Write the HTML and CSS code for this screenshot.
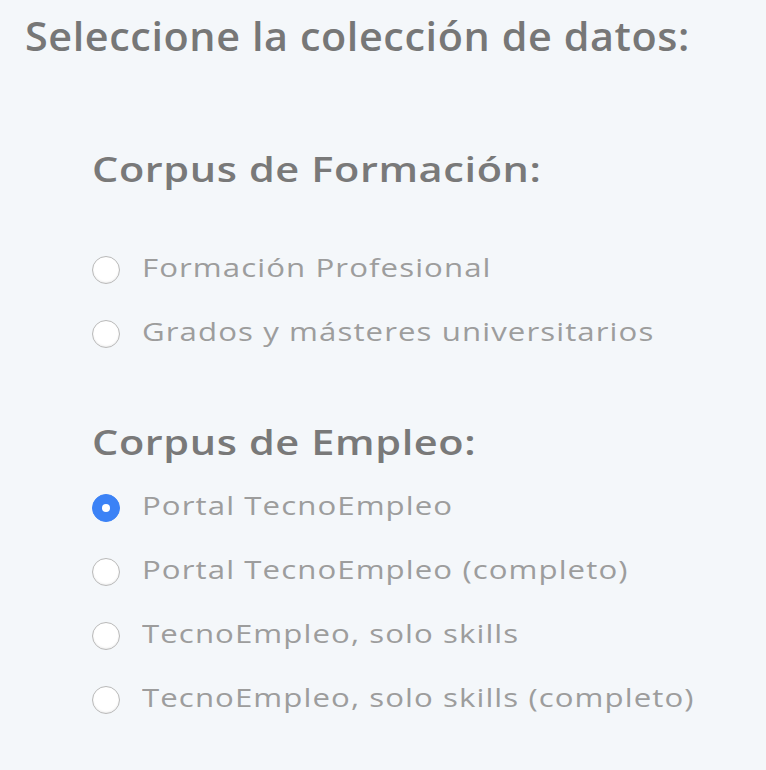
FILE: index.html
```html
<!DOCTYPE html>
<html lang="es">
<head>
<meta charset="utf-8">
<link rel="stylesheet" href="styles.css">
</head>
<body>
<div class="page">
  <h1 class="title"><span class="wide">Seleccione la colección de datos:</span></h1>
  <div class="group">
    <h2 class="group-title first"><span class="wide">Corpus de Formación:</span></h2>
    <label class="opt"><span class="radio"></span><span class="opt-text">Formación Profesional</span></label>
    <label class="opt"><span class="radio"></span><span class="opt-text">Grados y másteres universitarios</span></label>
    <h2 class="group-title second"><span class="wide">Corpus de Empleo:</span></h2>
    <label class="opt"><span class="radio checked"></span><span class="opt-text">Portal TecnoEmpleo</span></label>
    <label class="opt"><span class="radio"></span><span class="opt-text">Portal TecnoEmpleo (completo)</span></label>
    <label class="opt"><span class="radio"></span><span class="opt-text">TecnoEmpleo, solo skills</span></label>
    <label class="opt"><span class="radio"></span><span class="opt-text">TecnoEmpleo, solo skills (completo)</span></label>
  </div>
</div>
</body>
</html>
```
FILE: styles.css
```css
html, body {
  margin: 0;
  padding: 0;
  background: #f4f7fa;
}
body {
  font-family: "Open Sans", "DejaVu Sans", sans-serif;
  width: 766px;
  height: 770px;
  overflow: hidden;
}
.page {
  padding: 13px 0 0 25px;
}
.wide {
  display: inline-block;
  transform-origin: left center;
}
.title {
  margin: 0;
  font-size: 39px;
  font-weight: 600;
  letter-spacing: 0.55px;
  color: #777777;
  line-height: 46px;
  white-space: nowrap;
}
.title .wide {
  transform: scaleX(1.06);
}
.group {
  display: flex;
  flex-direction: column;
  padding-left: 67px;
}
.group-title {
  margin: 0;
  font-size: 34px;
  font-weight: 600;
  letter-spacing: 0.5px;
  color: #797979;
  line-height: 44px;
  white-space: nowrap;
}
.group-title .wide {
  transform: scaleX(1.22);
}
.group-title.first {
  margin-top: 88px;
  margin-bottom: 47px;
}
.group-title.second {
  margin-top: 54px;
  margin-bottom: 12px;
}
.opt {
  display: flex;
  align-items: center;
  gap: 22px;
  height: 64px;
}
.radio {
  width: 26px;
  height: 26px;
  border-radius: 50%;
  background: #fff;
  border: 1px solid #b9b9b9;
  box-shadow: inset 0 -1px 2px rgba(0,0,0,0.08);
  flex: none;
  position: relative;
}
.radio.checked {
  background: #3b82f6;
  border-color: #3b82f6;
  box-shadow: none;
}
.radio.checked::after {
  content: "";
  position: absolute;
  left: 9px;
  top: 9px;
  width: 8px;
  height: 8px;
  border-radius: 50%;
  background: #fff;
}
.opt-text {
  display: inline-block;
  transform: scaleX(1.2);
  transform-origin: left center;
  font-size: 26px;
  letter-spacing: 0.9px;
  color: #9d9d9d;
  line-height: 36px;
  padding-bottom: 6px;
  white-space: nowrap;
}
```
